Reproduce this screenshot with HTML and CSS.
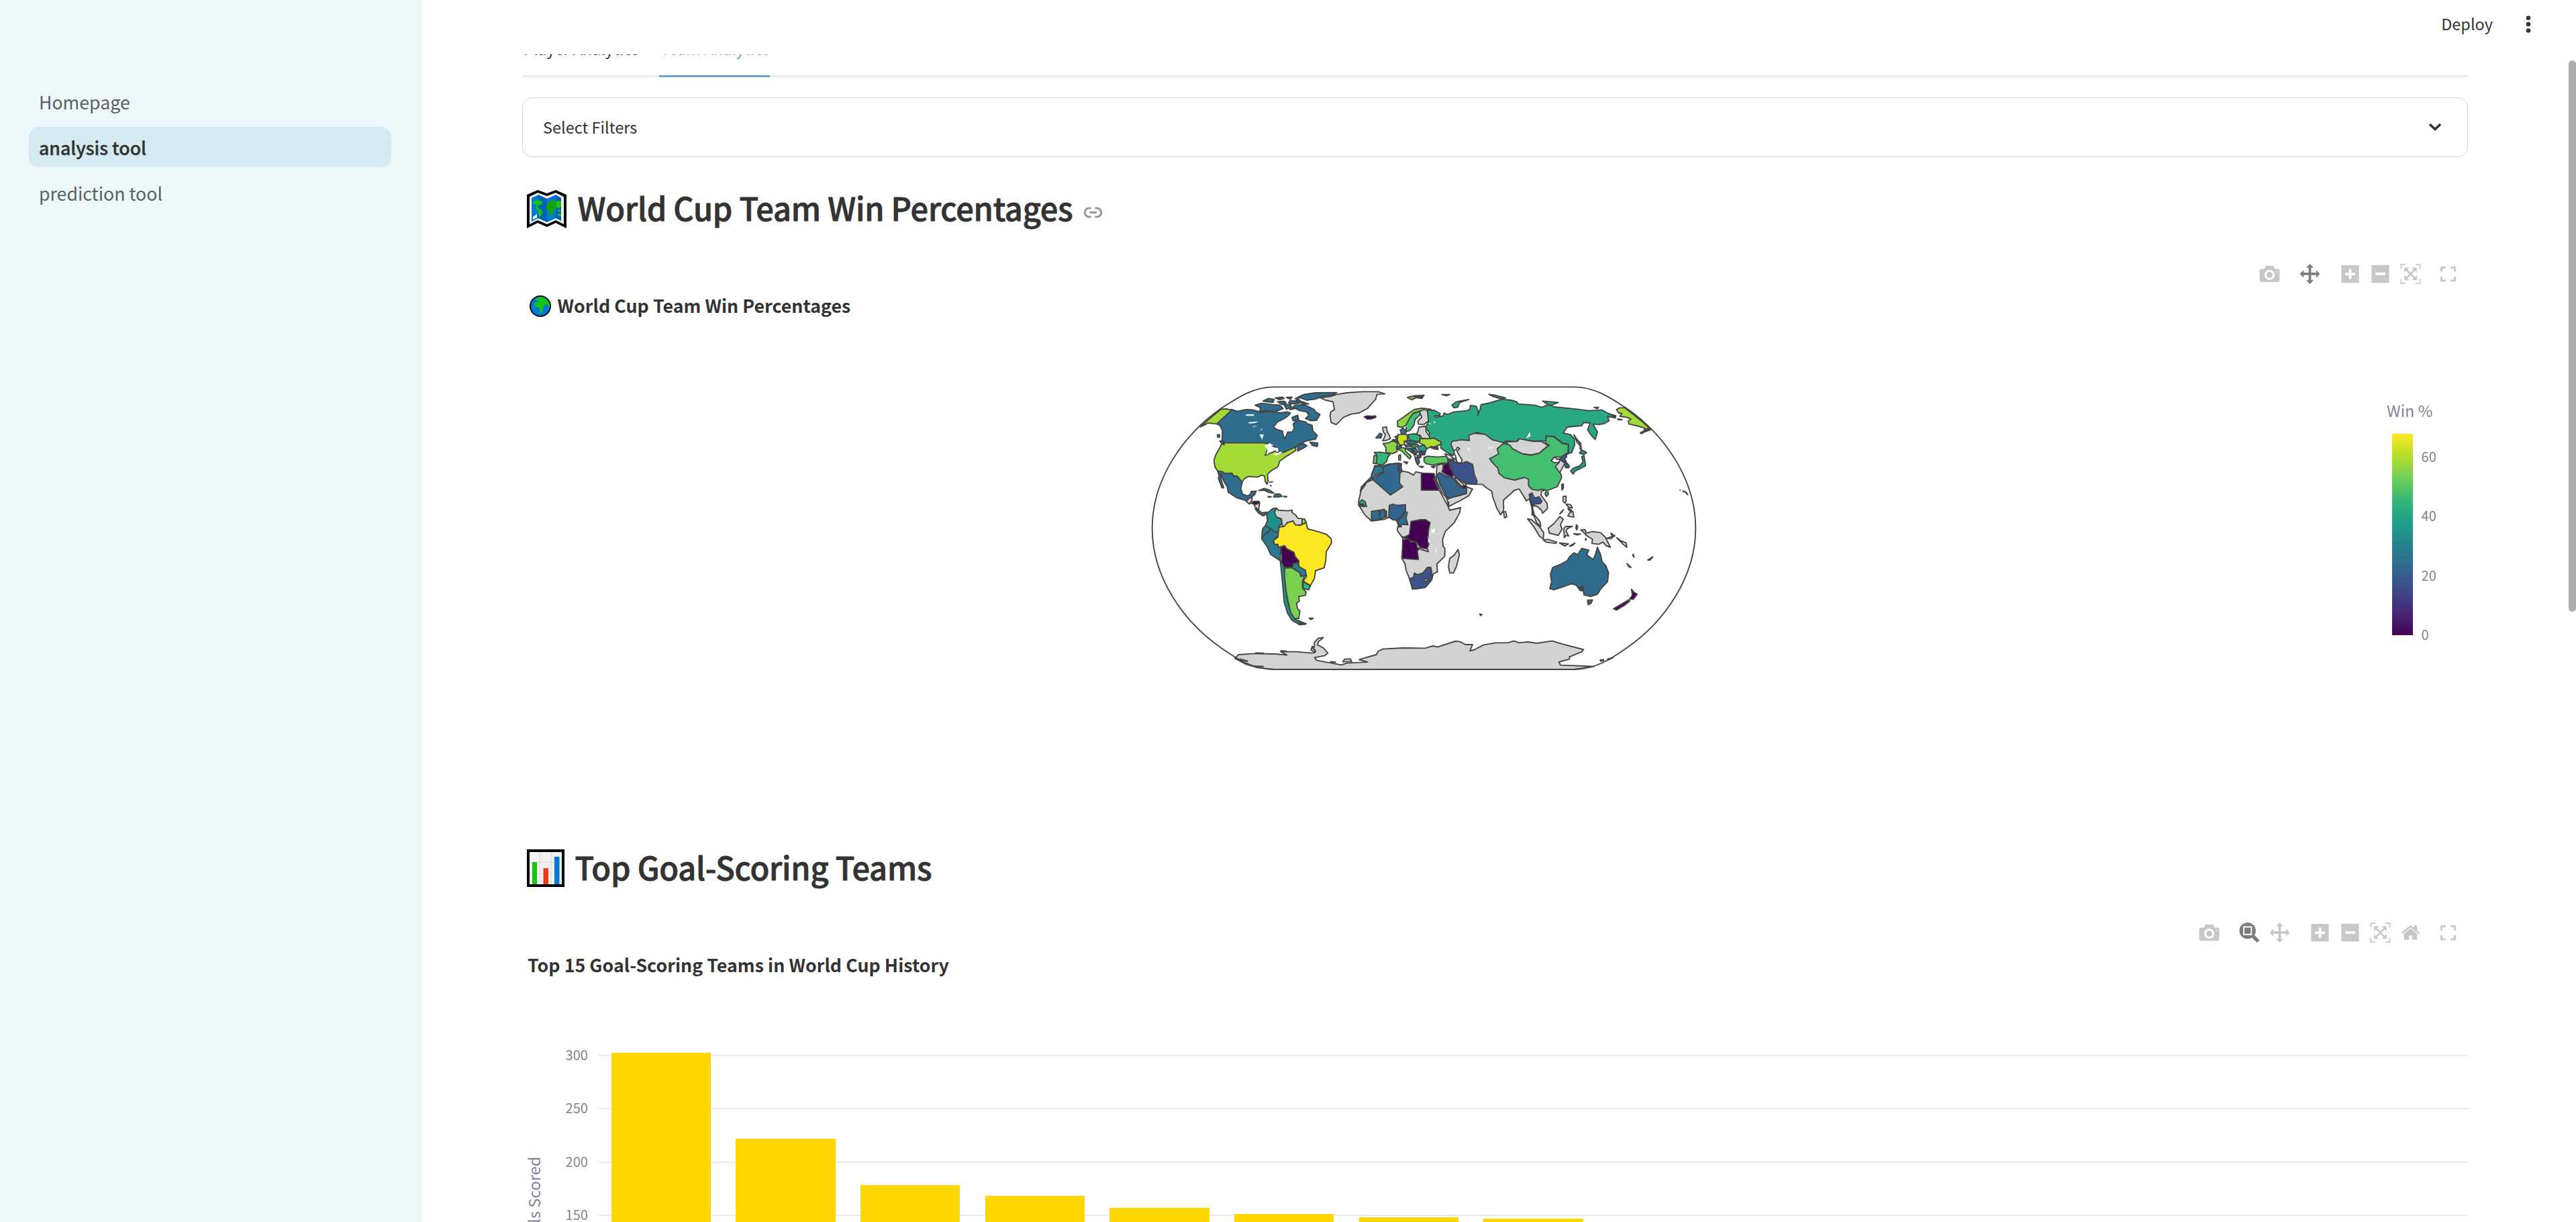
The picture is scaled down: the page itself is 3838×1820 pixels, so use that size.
FILE: index.html
```html
<!DOCTYPE html>
<html lang="en">
<head>
<meta charset="utf-8">
<title>analysis tool</title>
<link rel="stylesheet" href="styles.css">
</head>
<body>
<svg class="defs" aria-hidden="true">
  <symbol id="camera" viewBox="0 0 1000 1000"><path transform="matrix(1 0 0 -1 0 850)" d="m500 450c-83 0-150-67-150-150 0-83 67-150 150-150 83 0 150 67 150 150 0 83-67 150-150 150z m400 150h-120c-16 0-34 13-39 29l-31 93c-6 15-23 28-40 28h-340c-16 0-34-13-39-28l-31-94c-6-15-23-28-40-28h-120c-55 0-100-45-100-100v-450c0-55 45-100 100-100h800c55 0 100 45 100 100v450c0 55-45 100-100 100z m-400-550c-138 0-250 112-250 250 0 138 112 250 250 250 138 0 250-112 250-250 0-138-112-250-250-250z m365 380c-19 0-35 16-35 35 0 19 16 35 35 35 19 0 35-16 35-35 0-19-16-35-35-35z"/></symbol>
  <symbol id="zoombox" viewBox="0 0 1000 1000"><path transform="matrix(1 0 0 -1 0 850)" d="m1000-25l-250 251c40 63 63 138 63 218 0 224-182 406-407 406-224 0-406-182-406-406s183-406 407-406c80 0 155 22 218 62l250-250 125 125z m-812 250l0 438 437 0 0-438-437 0z m62 375l313 0 0-312-313 0 0 312z"/></symbol>
  <symbol id="pan" viewBox="0 0 1000 1000"><path transform="matrix(1 0 0 -1 0 850)" d="m1000 350l-187 188 0-125-250 0 0 250 125 0-188 187-187-187 125 0 0-250-250 0 0 125-188-188 186-187 0 125 252 0 0-250-125 0 187-188 188 188-125 0 0 250 250 0 0-126 187 188z"/></symbol>
  <symbol id="plus" viewBox="0 0 875 1000"><path transform="matrix(1 0 0 -1 0 850)" d="m1 787l0-875 875 0 0 875-875 0z m687-500l-187 0 0-187-125 0 0 187-188 0 0 125 188 0 0 187 125 0 0-187 187 0 0-125z"/></symbol>
  <symbol id="minus" viewBox="0 0 875 1000"><path transform="matrix(1 0 0 -1 0 850)" d="m0 788l0-876 875 0 0 876-875 0z m688-500l-500 0 0 125 500 0 0-125z"/></symbol>
  <symbol id="autoscale" viewBox="0 0 1000 1000"><path transform="matrix(1 0 0 -1 0 850)" d="m250 850l-187 0-63 0 0-62 0-188 63 0 0 188 187 0 0 62z m688 0l-188 0 0-62 188 0 0-188 62 0 0 188 0 62-62 0z m-875-938l0 188-63 0 0-188 0-62 63 0 187 0 0 62-187 0z m875 188l0-188-188 0 0-62 188 0 62 0 0 62 0 188-62 0z m-125 188l-1 0-93-94-156 156 156 156 92-93 2 0 0 250-250 0 0-2 93-92-156-156-156 156 94 92 0 2-250 0 0-250 0 0 93 93 157-156-157-156-93 94 0 0 0-250 250 0 0 0-94 93 156 157 156-157-93-93 0 0 250 0 0 250z"/></symbol>
  <symbol id="home" viewBox="0 0 928.6 1000"><path transform="matrix(1 0 0 -1 0 850)" d="m786 296v-267q0-15-11-26t-25-10h-214v214h-143v-214h-214q-15 0-25 10t-11 26v267q0 1 0 2t0 2l321 264 321-264q1-1 1-4z m124 39l-34-41q-5-5-12-6h-2q-7 0-12 3l-386 322-386-322q-7-4-13-4-7 2-12 7l-35 41q-4 5-3 13t6 12l401 334q18 15 42 15t43-15l136-114v109q0 8 5 13t13 5h107q8 0 13-5t5-13v-227l122-102q5-5 6-12t-4-13z"/></symbol>
  <symbol id="full" viewBox="0 0 24 24"><path fill="none" stroke="currentColor" stroke-width="3" stroke-linejoin="round" stroke-linecap="round" d="M2 7.5V2.5H7M17 2.5H22V7.5M22 17V22H17M7 22H2V17"/></symbol>
</svg>

<div class="app">
  <nav class="sidebar">
    <a class="nav-item">Homepage</a>
    <a class="nav-item active">analysis tool</a>
    <a class="nav-item">prediction tool</a>
  </nav>

  <main class="main">
    <header class="header">
      <span>Deploy</span>
      <svg class="dots" viewBox="0 0 8 26"><circle cx="4" cy="3.7" r="3.3"/><circle cx="4" cy="13.1" r="3.3"/><circle cx="4" cy="22.5" r="3.3"/></svg>
    </header>

    <div class="content">
      <div class="tabs">
        <span class="tab">Player Analytics</span>
        <span class="tab selected">Team Analytics</span>
      </div>

      <div class="expander">
        <span>Select Filters</span>
        <svg class="chevron" viewBox="0 0 20 12"><path d="M2 2L10 9.6L18 2"/></svg>
      </div>

      <h2 class="heading">
        <svg class="emoji-map" viewBox="0 0 60 57">
          <path d="M0 7L16 0 30 5 43 0 59 7V57L43 49 30 55 16 49 0 57Z"/>
          <path fill="#f0f0f0" d="M4 10L16 4 30 9 43 4 55 10V51L43 45 30 51 16 45 4 51Z"/>
          <path fill="#0078d7" d="M7 12L17 7V42L7 47ZM30 13L43 7V42L30 48Z"/>
          <path fill="#0063b1" d="M17 7L30 13V48L17 42ZM43 7L51 12V46L43 42Z"/>
          <path fill="#16c60c" d="M9 17L15 15 22 16 23 20 19 23 16 22 17 27 22 30 23 34 20 40 18 38 17 31 13 27 14 22 9 20ZM44 16L51 17V23L48 28 44 25ZM46 30L50 29V32L46 32ZM46 36L51 35V39L46 38Z"/>
          <path fill="#13a10e" d="M31 20L36 16 44 15V27L40 30 38 38 34 39 33 31 29 29 29 24Z"/>
          <path fill="#fff" d="M9 40L15 36V41L9 44Z"/>
        </svg>
        <span>World Cup Team Win Percentages</span>
        <svg class="link" viewBox="0 0 30 18"><path d="M12 2H9a7 7 0 0 0 0 14H12M18 2H21a7 7 0 0 1 0 14H18M9.5 9H20.5"/></svg>
      </h2>

      <section class="chart">
        <div class="modebar">
          <svg><use href="#camera"/></svg>
          <svg class="on gap"><use href="#pan"/></svg>
          <svg class="gap"><use href="#plus"/></svg>
          <svg><use href="#minus"/></svg>
          <svg><use href="#autoscale"/></svg>
          <svg class="fs"><use href="#full"/></svg>
        </div>
        <h3 class="chart-title with-icon">
          <svg class="emoji-globe" viewBox="0 0 32 32">
            <circle cx="16" cy="16" r="16"/><circle cx="16" cy="16" r="14.2" fill="#0078d7"/>
            <path fill="#16c60c" d="M9 6L13 3 17 2 23 4 28 9 30 14 30 18 28 16 25 13 22 14 20 20 18 26 16 27 15 21 14 18 9 17 7 13 9 10 13 10 15 8 12 8Z"/>
          </svg>
          <span>World Cup Team Win Percentages</span>
        </h3>
        <div class="geo-body">
          <svg class="worldmap" viewBox="0 0 2520 1320">
            <!-- Americas -->
            <g>
              <path fill="#2e6d8e" d="M405 149L430 158 470 150 500 151 535 162 580 158 620 165 655 160 668 166 655 180 640 190 610 205 592 228 608 240 632 246 637 270 645 277 656 250 676 250 685 232 680 215 690 203 712 200 737 205 742 213 765 220 768 245 788 265 780 282 740 290 720 298 692 318 675 330 645 338 632 342 590 350 612 345 615 330 600 318 555 300 375 298 362 285 364 245 352 220 338 214Z"/>
              <path fill="#a5db36" d="M358 148L380 147 405 152 338 214 300 210 285 218 265 228 290 205Z"/>
              <path fill="#a5db36" d="M375 299L545 299 575 303 555 355 600 335 615 345 640 340 690 318 692 332 665 350 645 362 620 380 612 405 580 425 565 440 568 470 563 484 555 470 552 447 540 443 520 452 480 449 460 460 452 476 440 460 430 448 415 447 405 434 375 436 362 428 342 424 330 405 326 375 335 350 350 325 362 300Z"/>
              <path fill="#2e6d8e" d="M342 424L362 428 375 436 405 434 415 447 430 448 440 460 452 476 446 505 455 528 475 536 488 530 492 516 515 514 508 530 495 540 485 545 470 558 455 552 430 545 390 520 385 495 370 470 358 440 354 436 360 470 370 500 362 500 345 455 350 450Z"/>
              <path fill="#d3d3d3" d="M470 560L485 545 497 545 495 558 485 572ZM505 572L525 565 530 570 525 600 515 590 508 582Z"/>
              <path fill="#440154" d="M492 568L505 560 528 560 530 568 510 575Z"/>
              <path fill="#2a788e" d="M510 592L525 598 540 612 563 608 563 616 545 625 525 612Z"/>
              <path fill="#2a788e" d="M526 512L550 502 575 510 595 524 570 520 550 510ZM600 528L620 527 632 538 610 541 592 540ZM568 538L582 540 570 542ZM640 537L653 539 640 541ZM573 475L590 472M576 488L584 492"/>
              <path fill="#21918c" d="M565 612L590 592 605 590 597 610 605 630 628 638 630 660 615 672 617 695 600 698 578 682 557 668 565 645 562 622Z"/>
              <path fill="#d3d3d3" d="M605 590L615 600 655 602 676 600 675 610 692 622 700 635 722 638 720 664 680 668 680 648 652 655 650 670 632 672 628 638 605 630 597 610Z"/>
              <path fill="#90d743" d="M720 640L730 638 738 652 728 664 720 660Z"/>
              <path fill="#277f8e" d="M557 668L578 682 572 695 560 700 550 712 540 722 542 690 545 680Z"/>
              <path fill="#2a788e" d="M578 682L600 698 617 695 615 712 598 725 592 745 612 758 625 765 622 825 580 798 565 765 538 725 550 712 572 695Z"/>
              <path fill="#fde725" d="M680 648L690 665 710 668 738 655 745 683 800 698 830 708 850 728 852 745 828 785 826 825 818 857 780 870 775 905 757 937 724 916 740 895 736 880 705 850 704 825 688 805 682 790 650 770 642 758 615 767 612 752 597 752 592 735 612 720 617 675 640 672 655 655Z"/>
              <path fill="#440154" d="M625 768L640 758 650 772 684 788 688 808 705 825 705 832 680 838 675 855 640 855 628 830 630 805Z"/>
              <path fill="#277f8e" d="M680 838L702 834 707 852 735 868 738 892 715 895 710 878 678 858Z"/>
              <path fill="#7ad151" d="M642 858L675 857 710 880 714 896 732 892 722 915 722 948 738 965 735 980 705 985 708 1005 695 1015 700 1040 710 1050 705 1083 685 1085 668 1055 658 1010 648 960 640 900Z"/>
              <path fill="#35b779" d="M724 918L757 938 750 955 725 950Z"/>
              <path fill="#21918c" d="M622 825L628 830 640 858 642 900 648 960 656 1010 670 1060 688 1087 720 1100 738 1108 710 1112 675 1092 655 1060 640 1010 634 940 625 850Z"/>
              <path d="M705 1100L738 1107 715 1111ZM752 1082L770 1082 760 1088Z"/>
              <path fill="#d3d3d3" d="M802 98L850 90 875 82 920 75 990 70 1060 70 1090 80 1055 82 1048 105 1030 125 1012 145 975 165 940 170 905 185 885 205 872 217 850 208 845 180 848 160 865 150 858 115 825 108Z"/>
              <path fill="#2e6d8e" d="M700 95L730 82 780 75 875 74 855 85 815 90 780 103 740 108 720 100ZM665 150L690 130 730 128 775 150 780 160 800 172 785 198 760 200 735 190 750 175 740 160 710 155 690 145ZM510 130L540 122 590 128 620 130 635 145 600 160 560 155 530 158 535 142ZM675 185L700 175 705 195 680 200ZM700 310L725 302 742 312 720 325 700 335ZM755 295L790 300 788 315 765 310Z"/>
              <path fill="#2e6d8e" d="M545 112L570 100 595 105 590 118 560 115ZM600 98L630 94 640 100 620 106ZM610 115L640 112 650 122 630 128ZM650 96L675 94 668 104ZM665 110L700 112 705 122 680 125 660 120ZM690 100L700 98 712 112 750 125 730 125 700 118ZM640 130L668 126 672 140 650 148Z"/>
              <path d="M342 262L352 262 350 275 342 272ZM352 290L366 290 372 308 360 300Z" fill="#2e6d8e"/>
              <path fill="#440154" d="M998 182L1012 178 1030 180 1048 178 1050 184 1030 192 1010 192Z"/>
            </g>
            <g class="water">
              <path d="M468 172L505 171 505 178 470 178ZM475 207L525 203 510 210 488 212ZM495 225L522 223 505 227ZM530 243L545 233 540 240ZM530 262L548 260 542 285ZM552 312L575 300 592 310 565 320 578 318 585 330 560 355 565 330ZM598 320L612 322 615 335 605 340ZM590 350L625 338 632 342 605 355ZM402 356L407 358 403 361Z"/>
            </g>

            <!-- Africa -->
            <g transform="translate(960 0)">
              <path class="land" d="M85 400L100 402 125 400 150 393 195 390 207 425 235 430 258 443 268 428 295 434 350 436 355 460 372 508 395 550 412 582 420 600 468 588 465 610 440 655 400 695 388 730 390 760 398 770 398 805 362 840 365 875 345 885 340 910 315 940 290 948 255 952 240 905 225 870 220 840 205 812 212 760 210 725 185 690 190 665 180 640 145 632 130 640 70 648 40 620 15 580 12 560 22 520 30 490 70 450Z"/>
              <path class="land" d="M457 775L463 800 450 850 437 880 420 880 414 850 420 815 440 800Z"/>
              <path fill="#2a788e" d="M85 405L100 402 122 407 124 425 80 450 72 465 48 475 40 490 20 515 25 495 70 460 70 440Z"/>
              <path fill="#31688e" d="M122 407L150 394 192 390 188 410 197 440 195 478 210 495 155 532 75 462 124 430Z"/>
              <path fill="#3b528b" d="M192 390L204 392 202 412 207 425 197 435 188 412Z"/>
              <path fill="#440154" d="M293 434L350 437 355 455 348 458 370 510 293 510Z"/>
              <path fill="#28ae80" d="M15 565L28 553 42 562 48 583 15 582Z"/>
              <path d="M12 573L35 572 35 578 14 579Z"/>
              <path fill="#2e6d8e" d="M70 605L105 600 107 642 70 646ZM108 600L128 595 133 630 108 640Z"/>
              <path fill="#440154" d="M131 604L137 603 137 630 133 632Z"/>
              <path fill="#33638d" d="M150 578L165 573 185 578 222 575 222 600 205 625 185 645 165 642 147 630Z"/>
              <path fill="#2e6d8e" d="M185 648L205 630 222 605 230 610 225 635 233 665 190 662Z"/>
              <path fill="#440154" d="M192 668L203 667 203 674 192 674Z"/>
              <path fill="#440154" d="M247 650L290 642 312 642 332 655 325 690 322 745 327 750 318 772 290 768 270 740 240 735 215 722 240 708Z"/>
              <path fill="#440154" d="M210 730L240 730 245 742 270 740 275 768 288 770 275 780 280 820 207 815Z"/>
              <path fill="none" d="M207 718L230 720M290 775L325 785 318 770"/>
              <path fill="#3b528b" d="M240 905L258 900 262 880 275 888 300 880 320 855 335 855 340 880 333 885 345 890 335 915 310 945 285 948 253 952Z"/>
              <path fill="#d3d3d3" d="M305 912L315 904 322 911 312 920Z"/>
            </g>

            <!-- Asia and Oceania -->
            <g transform="translate(1500 0)">
              <path class="land" d="M-115 295L-20 255 60 262 125 298 310 270 400 380 335 500 290 515 288 532 315 570 317 592 295 613 290 600 270 582 250 580 250 612 268 632 283 650 287 672 268 655 252 615 245 580 235 548 222 558 212 540 190 505 170 510 120 555 121 600 107 620 90 590 72 540 68 515 45 500 25 484 -10 484 -50 480 -45 495 -18 505 -35 535 -70 555 -125 583 -130 560 -135 545 -155 520 -180 465 -178 400 -150 390 -130 385 -128 360 -100 368 -85 383 -65 388 -75 370 -92 345 -115 318Z"/>
              <path class="sea" d="M-92 330L-85 318 -75 325 -88 335 -80 350 -65 375 -68 390 -88 385 -95 355 -105 335Z"/>
              <path class="sea" d="M-98 450L-85 460 -62 482 -52 498 -70 490 -92 465Z"/>
              <path fill="#3b528b" d="M-128 375L-105 378 -85 390 -60 388 -45 382 -18 395 -10 440 2 470 0 482 -40 482 -60 475 -88 455 -105 440 -118 405Z"/>
              <path fill="#440154" d="M-145 395L-125 390 -118 415 -102 440 -110 452 -135 440 -155 428Z"/>
              <path fill="#33638d" d="M-178 440L-165 432 -135 448 -105 455 -90 475 -70 495 -45 500 -45 525 -90 538 -108 540 -128 548 -148 515 -165 480Z"/>
              <path fill="#440154" d="M-68 494L-48 488 -46 500 -60 503Z"/>
              <path fill="none" d="M-130 550L-108 542 -65 530M-180 390L-150 395 -150 425M-125 560L-125 580"/>
              <path fill="#28a883" d="M-222 152L-190 153 -162 168 -165 176 -188 178 -182 185 -150 178 -145 165 -130 172 -100 160 -45 155 -30 150 -28 132 -2 135 8 160 5 175 15 150 20 128 60 120 112 104 155 108 180 115 185 125 260 130 290 140 330 125 345 138 450 148 500 155 560 152 590 168 622 178 620 188 585 180 592 200 570 213 545 217 520 215 540 250 530 284 510 262 496 240 508 210 478 208 470 222 405 228 387 255 420 262 437 280 438 310 425 342 410 347 410 305 385 300 345 270 310 268 310 290 250 290 185 282 183 292 130 290 122 298 90 290 70 285 40 262 0 252 -35 265 -32 288 -70 285 -110 292 -115 305 -100 340 -105 356 -135 340 -160 322 -160 300 -215 275 -210 255 -228 230 -215 205Z"/>
              <path fill="#28a883" d="M-110 130L-90 115 -35 105 -75 118 -85 140 -102 142ZM55 82L80 85 130 98 110 102 70 90ZM295 112L365 118 330 132 310 122Z"/>
              <path d="M525 140L545 140 540 146ZM-155 83L-120 83 -135 88Z"/>
              <path class="land" d="M130 295L183 292 190 280 250 292 290 293 320 310 300 328 280 345 245 352 205 348 160 325Z"/>
              <path fill="#44bf70" d="M58 370L98 348 92 325 122 300 150 310 160 325 205 348 245 354 280 345 300 328 325 310 308 300 312 268 345 272 385 302 410 306 408 348 385 362 350 362 335 378 352 385 370 385 352 405 378 440 380 455 360 495 315 512 290 505 275 512 245 505 232 490 232 462 215 453 170 465 125 455 100 435 95 412 78 395Z"/>
              <path class="sea" d="M333 378L350 362 358 372 375 372 365 388 345 386Z"/>
              <path fill="#44bf70" d="M308 518L320 518 320 530 312 538 306 528Z"/>
              <path fill="#3b528b" d="M375 365L402 345 402 362 390 372 415 402 412 410 398 410 392 388 378 378Z"/>
              <path fill="#3b528b" d="M235 530L248 522 258 545 280 540 292 560 285 570 262 572 248 580 258 620 248 622 248 580Z"/>
              <path fill="#1f9e89" d="M420 425L432 412 460 402 475 385 470 360 480 355 485 385 487 402 470 410 440 425 432 438ZM460 345L470 330 492 342 480 350ZM435 262L450 285 465 300 462 310 450 298ZM465 300L468 330 462 325Z"/>
              <path fill="#2a788e" d="M380 485L388 483 388 500 382 510Z"/>
              <path class="land" d="M387 538L400 537 400 560 395 568 386 560ZM400 572L420 575 428 590 412 588ZM408 592L425 600 418 605ZM415 612L430 605 435 630 420 628 408 625ZM372 615L388 597 380 610ZM120 608L130 606 135 628 125 634Z"/>
              <path class="land" d="M228 638L245 642 280 672 300 700 298 728 280 715 260 680ZM298 732L320 730 358 742 355 748 310 742ZM320 680L345 660 372 628 387 640 375 665 382 685 365 712 325 702Z"/>
              <path class="land" d="M390 680L400 672 428 672 405 682 400 695 412 715 400 712 392 722ZM446 665L452 672 448 688 444 680ZM434 705L465 706 450 710ZM370 746L410 750 395 760ZM415 760L440 746 428 758ZM488 725L490 732 486 732Z"/>
              <path class="land" d="M465 688L485 686 490 702 520 695 555 700 575 720 598 765 578 758 565 742 545 752 515 748 518 730 490 712 478 698ZM582 725L612 715 600 728ZM600 702L618 714 608 720ZM625 722L648 738 668 745 672 765 655 752ZM700 796L704 810 698 802ZM672 838L690 855 680 852ZM765 822L788 808 775 822Z"/>
              <path fill="#306c8e" d="M340 855L378 840 405 825 415 808 435 790 452 798 470 770 502 778 492 798 520 820 530 800 540 765 555 800 560 828 578 848 590 880 585 920 560 945 540 975 510 985 480 978 475 945 462 955 445 935 425 928 385 942 345 955 327 950 335 920 330 885Z"/>
              <path d="M456 948L475 938 476 960 462 958Z"/>
              <path fill="#306c8e" d="M496 1002L518 1000 512 1015 498 1022Z"/>
              <path fill="#440154" d="M692 952L702 965 718 975 700 998 684 996 696 980ZM612 1040L650 1018 680 1000 685 1005 660 1025 625 1046Z"/>
              <path fill="#a5db36" d="M625 150L640 142 662 142 700 172 745 208 775 236 762 235 750 248 750 232 715 222 682 215 678 202 690 192 672 185 640 180 650 168 635 165Z"/>
              <path d="M755 236L778 240 750 250 735 258 732 254 750 244ZM600 172L622 178 615 184ZM630 192L650 195 635 196Z"/>
              <path fill="none" stroke-width="7" d="M908 508L912 510M920 514L935 519 945 532"/>
              <path class="land" d="M14 1063L24 1066 18 1070Z"/>
            </g>

            <!-- Europe -->
            <g transform="translate(780 120)">
              <path fill="#8fd744" d="M366 82L385 70 415 48 440 30 475 24 515 28 495 36 468 36 440 45 420 70 405 100 385 110 367 105Z"/>
              <path fill="#8fd744" d="M410 -24L435 -30 455 -26 430 -14Z"/>
              <path d="M440 -32L485 -34 475 -20 455 -22Z"/>
              <path fill="#42be71" d="M405 98L420 70 435 48 465 38 468 52 445 75 440 100 420 125 405 128Z"/>
              <path class="land" d="M465 38L485 30 500 36 505 80 485 97 460 95 458 80 475 65ZM462 108L492 105 495 130 510 150 508 162 475 158 468 145 450 140 458 128Z"/>
              <path fill="#2a788e" d="M378 122L392 112 402 125 405 135 385 140ZM270 156L288 135 298 142 292 157Z"/>
              <path class="land" d="M300 110L318 108 320 128 330 145 335 160 315 168 300 170 308 155 312 140 303 130Z"/>
              <path fill="#c8e020" d="M368 142L390 140 410 143 412 168 395 172 400 187 375 188 366 168Z"/>
              <path fill="#8bd646" d="M302 182L318 180 328 178 345 168 368 182 362 195 365 218 345 227 315 222 315 200ZM355 152L368 146 365 162Z"/>
              <path fill="#21918c" d="M345 165L365 164 366 178Z"/>
              <path fill="#35b779" d="M263 222L290 220 335 228 322 245 318 262 302 275 282 277 272 270 275 235Z"/>
              <path fill="#5ec962" d="M262 235L275 235 272 272 258 270Z"/>
              <path fill="#2cb17e" d="M413 142L440 138 465 145 468 165 460 173 420 168Z"/>
              <path fill="#21808d" d="M400 172L425 168 460 176 430 184 410 180ZM362 195L385 190 382 202 365 204ZM400 190L420 184 428 194 405 198Z"/>
              <path fill="#7ad151" d="M366 208L385 200 402 203 402 215 428 240 420 250 400 230 385 215ZM372 235L380 232 380 255 372 255ZM395 263L412 265 408 272Z"/>
              <path fill="#2ab07f" d="M425 190L455 184 460 192 435 203Z"/>
              <path fill="#2a788e" d="M405 205L425 202 440 215 450 235 435 225ZM425 205L448 203 458 220 445 228Z"/>
              <path fill="#1f9a8a" d="M455 195L485 188 498 205 490 218 465 216Z"/>
              <path fill="#414487" d="M462 218L492 218 488 232 465 234Z"/>
              <path class="land" d="M440 228L460 235 448 250Z"/>
              <path fill="#31688e" d="M445 248L470 238 472 243 458 250 465 262 458 278 450 265Z"/>
              <path fill="#addc30" d="M468 160L508 160 530 158 562 175 560 185 530 198 515 195 498 205 485 188 465 180Z"/>
              <path fill="#5ec962" d="M485 245L500 238 545 242 590 238 592 268 560 270 525 278 495 272 485 262Z"/>
              <path class="land" d="M578 228L605 235 618 255 592 250Z"/>
              <path d="M463 283L483 285 475 289ZM518 284L535 282 528 291ZM515 200L545 195 548 208 530 206Z"/>
              <g class="water"><path d="M505 88L517 94 510 97ZM527 80L537 88 530 91ZM403 103L412 104 404 108Z"/></g>
            </g>
            <g class="water">
              <path d="M1738 250L1741 268 1720 280 1728 268ZM1550 320L1580 317 1552 326ZM1458 325L1468 320 1466 334ZM1300 685L1315 682 1310 700 1300 700ZM1315 755L1322 790 1317 790ZM1282 715L1290 742 1284 740Z"/>
            </g>

            <!-- Antarctica -->
            <g transform="translate(420 1140)">
              <path class="land" d="M0 122L15 105 90 100 180 102 232 107 205 92 270 92 345 98 360 95 340 85 345 68 355 72 355 50 372 32 395 28 372 48 370 62 395 75 415 98 400 110 355 118 365 130 475 151 500 143 592 138 555 127 632 105 640 90 660 80 750 75 850 76 885 66 905 71 985 45 1005 47 1030 60 1062 60 1050 88 1068 84 1110 62 1165 52 1220 52 1247 44 1270 52 1310 48 1350 54 1418 44 1465 58 1530 75 1558 82 1550 92 1495 115 1495 125 1448 138 1455 152 1560 156 1605 158 1515 171 175 171 100 163 50 148Z"/>
              <path class="land" d="M482 137L490 125 515 124 522 136Z"/>
              <path fill="none" stroke-width="7" d="M90 98L130 99M203 88L232 90M425 137L452 139M85 157L128 158M345 72L362 90M20 125L58 135"/>
              <path class="land" d="M1632 129L1648 127 1646 133 1634 134ZM1665 125L1690 118 1670 128Z"/>
            </g>
            <path class="frame" d="M595 49C500 49 430 98 358 145C190 262 50 460 50 680C50 900 190 1098 358 1215C430 1265 500 1311 595 1311H1935C2029 1311 2100 1265 2171 1215C2339 1098 2479 900 2479 680C2479 460 2339 262 2171 145C2100 98 2029 49 1935 49Z"/>
          </svg>

          <div class="colorbar">
            <div class="cb-title">Win %</div>
            <div class="cb-row">
              <div class="cb-scale"></div>
              <div class="cb-ticks"><span>60</span><span>40</span><span>20</span><span>0</span></div>
            </div>
          </div>
        </div>
      </section>

      <h2 class="heading second">
        <svg class="emoji-bars" viewBox="0 0 56 56">
          <path d="M0 0H56V56H0Z"/><path fill="#f2f2f2" d="M4 4H52V52H4Z"/>
          <path stroke="#e0e0e0" stroke-width="1.5" d="M19.500 4V52M36.500 4V52M4 19H52M4 36H52"/>
          <path fill="#16c60c" d="M8 19H15V52H8Z"/><path fill="#f03a17" d="M24.500 28H32V52H24.500Z"/><path fill="#0078d7" d="M41 11H48.500V52H41Z"/>
        </svg>
        <span>Top Goal-Scoring Teams</span>
      </h2>

      <section class="chart">
        <div class="modebar">
          <svg><use href="#camera"/></svg>
          <svg class="on gap"><use href="#zoombox"/></svg>
          <svg><use href="#pan"/></svg>
          <svg class="gap"><use href="#plus"/></svg>
          <svg><use href="#minus"/></svg>
          <svg><use href="#autoscale"/></svg>
          <svg><use href="#home"/></svg>
          <svg class="fs"><use href="#full"/></svg>
        </div>
        <h3 class="chart-title">Top 15 Goal-Scoring Teams in World Cup History</h3>
        <div class="bar-body">
          <div class="axis-title">Goals Scored</div>
          <div class="y-ticks"><span>300</span><span>250</span><span>200</span><span>150</span></div>
          <div class="plot">
            <div class="grid"><i></i><i></i><i></i><i></i></div>
            <div class="bars">
              <b style="height:252.5px"></b><b style="height:124.4px"></b><b style="height:54.6px"></b><b style="height:38.6px"></b><b style="height:21px"></b><b style="height:11.600px"></b><b style="height:6.700px"></b><b style="height:5px"></b>
            </div>
          </div>
        </div>
      </section>
    </div>
  </main>
  <div class="scrollbar"></div>
</div>
</body>
</html>
```
FILE: styles.css
```css
* { box-sizing: border-box; }
body {
  margin: 0;
  background: #fff;
  color: #333;
  font-family: "Noto Sans CJK SC", "Noto Sans", sans-serif;
  font-size: 23.5px;
}
svg { display: block; flex: none; }
.defs { position: absolute; width: 0; height: 0; }
.app { display: flex; width: 100%; height: 1820px; overflow: hidden; position: relative; }

.sidebar {
  width: 628px;
  flex: none;
  background: #edf7fa;
  padding: 121px 45px 0 43px;
  display: flex;
  flex-direction: column;
  gap: 8px;
}
.nav-item {
  height: 60px;
  line-height: 61px;
  padding-left: 15px;
  border-radius: 15px;
  font-size: 26.7px;
  color: #5c5f60;
}
.nav-item.active { background: #d5e9f0; color: #333; font-weight: 500; -webkit-text-stroke: .4px #333; }

.main { flex: 1; min-width: 0; }
.header {
  height: 81px;
  padding: 0 67px 0 0;
  display: flex;
  justify-content: flex-end;
  gap: 49px;
  line-height: 30px;
}
.header span { padding-top: 20px; }
.dots { width: 8px; height: 26px; margin-top: 23px; fill: #333; }

.content { padding: 0 161px 0 150px; }
.tabs {
  height: 34px;
  overflow: hidden;
  display: flex;
  align-items: flex-end;
  gap: 31px;
  box-shadow: inset 0 -3px #e9eaeb;
}
.tab { font-size: 23.3px; line-height: 30px; padding: 0 1px 25px 2px; border-bottom: 3px solid transparent; white-space: nowrap; }
.tab:first-child { width: 173px; }
.tab.selected { width: 165px; color: #6ca3c4; border-color: #6ca3c4; }

.expander {
  margin-top: 30px;
  height: 89px;
  border: 1px solid #d5d6d8;
  border-radius: 15px;
  padding: 0 38px 2px 30px;
  display: flex;
  align-items: center;
  justify-content: space-between;
}
.chevron { width: 20px; height: 12px; fill: none; stroke: #333; stroke-width: 3.4; }

.heading {
  margin: 43.500px 0 0;
  height: 60px;
  display: flex;
  align-items: center;
  padding-left: 7px;
  font-size: 47px;
  line-height: 60px;
  font-weight: 500;
  letter-spacing: -.25px;
  -webkit-text-stroke: .8px #333;
  white-space: nowrap;
}
.heading span { padding-top: 2px; }
.heading.second { margin-top: 0; padding-left: 6.500px; }
.heading.second span { padding-top: 1px; }
.emoji-map { width: 60px; height: 57px; margin: 7px 15.500px 0 0; }
.emoji-bars { width: 56px; height: 56px; margin: 5px 16px 0 0; }
.link { width: 31px; height: 17px; margin: 17px 0 0 15px; fill: none; stroke: #97989b; stroke-width: 3.2; }

.modebar { height: 30px; display: flex; justify-content: flex-end; align-items: center; padding-right: 7px; color: #c7c7c7; }
.modebar svg { width: 45px; height: 30px; fill: currentColor; }
.modebar .on { color: #7c7c7c; }
.modebar .gap { margin-left: 15px; }
.modebar .fs { margin-left: 11px; height: 24px; }
.chart { padding-top: 55.500px; }
.second + .chart { padding-top: 53.500px; }

.chart-title {
  margin: 11px 0 0;
  height: 40px;
  line-height: 42px;
  font-size: 26.800px;
  font-weight: 700;
  padding-left: 8px;
  display: flex;
  white-space: nowrap;
}
.second + .chart .chart-title { margin-top: 12px; }
.chart-title.with-icon { padding-left: 11px; gap: 9.500px; }
.emoji-globe { width: 32px; height: 32px; margin-top: 5.500px; }

.geo-body { display: flex; height: 786.500px; }
.worldmap { width: 840px; height: 440px; margin: 86px 0 0 922px; stroke: #444; stroke-width: 5.6; stroke-linejoin: round; fill: #444; }
.land { fill: #d3d3d3; }
.sea { fill: #fff; }
.water { fill: #fff; stroke: none; }
.frame { fill: none; }

.colorbar { margin: 122px 0 0 auto; width: 121px; color: #808495; }
.cb-title { line-height: 30px; }
.cb-row { display: flex; padding: 19.700px 0 0 8px; gap: 13px; }
.cb-scale {
  width: 30.500px;
  height: 300px;
  background: linear-gradient(to top, #440154, #482878 11.1%, #3e4989 22.2%, #31688e 33.3%, #26828e 44.4%, #1f9e89 55.600%, #35b779 66.700%, #6ece58 77.800%, #b5de2b 88.900%, #fde725);
}
.cb-ticks { display: flex; flex-direction: column; margin-top: -9.500px; font-size: 20.100px; }
.cb-ticks span { height: 88.300px; line-height: 88.300px; }

.bar-body { display: flex; height: 364px; overflow: hidden; color: #808495; }
.axis-title { width: 30px; margin: 267px 0 0 2px; writing-mode: vertical-rl; transform: rotate(180deg); line-height: 30px; height: 150px; flex: none; text-align: right; white-space: nowrap; }
.y-ticks { width: 66px; flex: none; display: flex; flex-direction: column; text-align: right; padding-top: 75px; font-size: 20.100px; }
.y-ticks span { flex: none; height: 79.300px; line-height: 79.300px; }
.plot { flex: 1; margin-left: 16px; display: grid; }
.grid, .bars { grid-area: 1 / 1; min-height: 0; }
.grid { padding-top: 115px; display: flex; flex-direction: column; }
.grid i { flex: none; height: 79.300px; border-top: 2px solid #e6eaf1; }
.bars { display: grid; grid-template-columns: repeat(15, 1fr); align-items: end; justify-items: center; height: 364px; }
.bars b { width: 148.500px; background: #ffd700; }

.scrollbar { position: absolute; right: 0; top: 90px; width: 11px; height: 821px; border-radius: 6px; background: #adadad; }
```
